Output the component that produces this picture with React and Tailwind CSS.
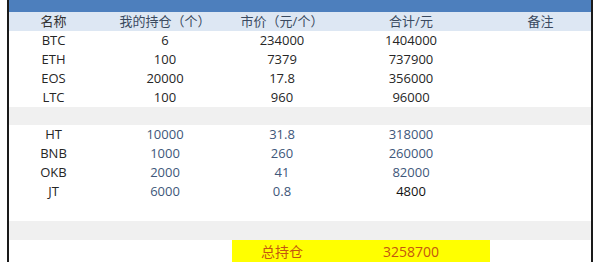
import React from "react";

const cols = ["w-[89px]", "w-[134px]", "w-[100px]", "w-[158px]", "w-[101px]"];

const group1 = [
  ["BTC", "6", "234000", "1404000"],
  ["ETH", "100", "7379", "737900"],
  ["EOS", "20000", "17.8", "356000"],
  ["LTC", "100", "960", "96000"],
];

const group2 = [
  ["HT", "10000", "31.8", "318000"],
  ["BNB", "1000", "260", "260000"],
  ["OKB", "2000", "41", "82000"],
  ["JT", "6000", "0.8", "4800"],
];

function Row({ cells, className = "", colors = [] }) {
  return (
    <div className={`flex h-[19px] items-center ${className}`}>
      {cols.map((w, i) => (
        <div key={i} className={`${w} text-center ${colors[i] || "text-[#262626]"}`}>
          {cells[i] || ""}
        </div>
      ))}
    </div>
  );
}

export default function App() {
  return (
    <div className="w-[600px] h-[262px] bg-white overflow-hidden flex font-['Open_Sans','Noto_Sans_CJK_SC',sans-serif] text-[13px] leading-[19px]">
      <div className="ml-[7px] w-[586px] border-l-2 border-r-2 border-[#1a1a1a] flex flex-col">
        <div className="h-[12px] bg-[#4d7fbd] shrink-0" />
        <Row
          cells={["名称", "我的持仓（个）", "市价（元/个）", "合计/元", "备注"]}
          className="bg-[#dde7f3]"
          colors={["text-[#333]", "text-[#3a4a60]", "text-[#3a4a60]", "text-[#3a4a60]", "text-[#3a4a60]"]}
        />
        {group1.map((r) => (
          <Row key={r[0]} cells={r} />
        ))}
        <div className="h-[18px] bg-[#f0f0f0] shrink-0" />
        {group2.map((r) => (
          <Row
            key={r[0]}
            cells={r}
            colors={[
              "text-[#262626]",
              "text-[#40577a]",
              "text-[#40577a]",
              r[0] === "JT" ? "text-[#111]" : "text-[#40577a]",
            ]}
          />
        ))}
        <div className="h-[20px] shrink-0" />
        <div className="h-[19px] bg-[#f0f0f0] shrink-0" />
        <div className="flex h-[22px] items-center shrink-0">
          <div className="w-[223px]" />
          <div className="w-[258px] h-full bg-[#ffff00] flex items-center text-[#c4560f] text-[14px]">
            <div className="w-[100px] text-center">总持仓</div>
            <div className="w-[158px] text-center">3258700</div>
          </div>
        </div>
      </div>
    </div>
  );
}
